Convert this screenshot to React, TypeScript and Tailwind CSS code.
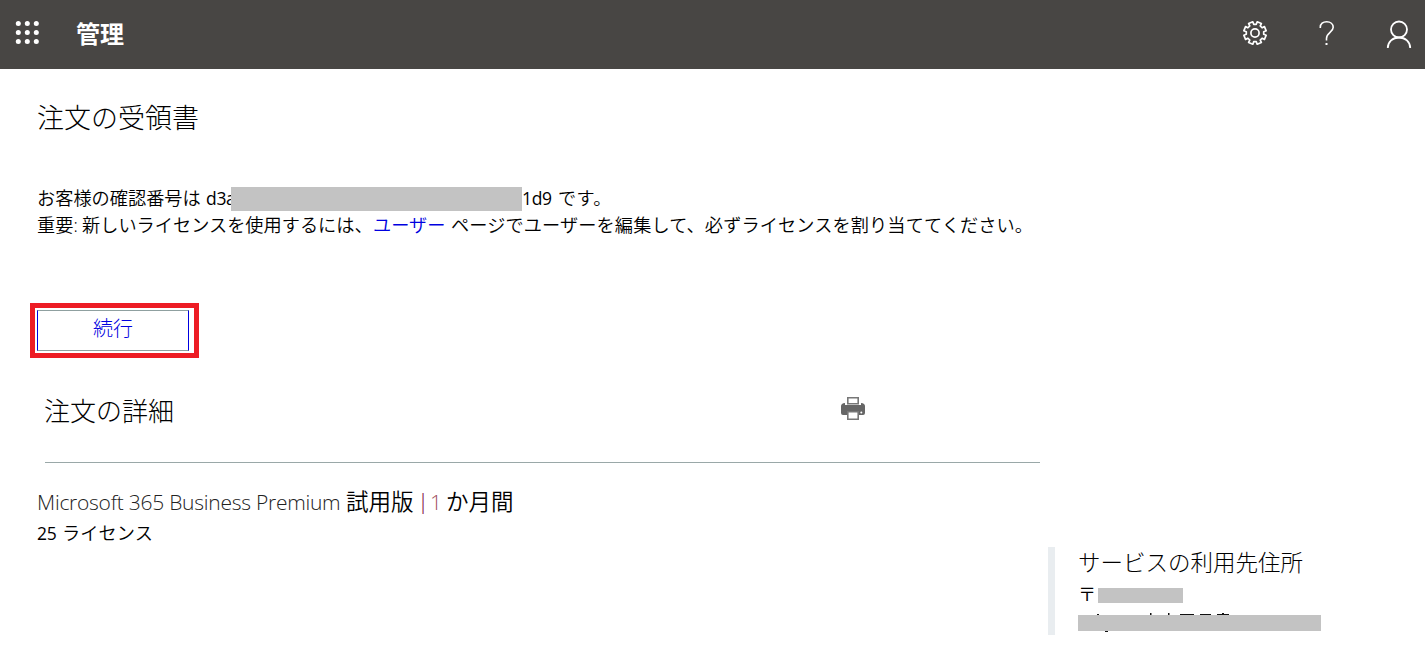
import React from "react";

interface RedactedProps {
    className: string;
}

const Redacted = ({ className }: RedactedProps) => (
    <span className={`block shrink-0 bg-[#c3c3c3] ${className}`} />
);

const WaffleIcon = () => (
    <svg width="25" height="24" viewBox="0 0 25 24" fill="#fff">
        {[2.5, 11.5, 20.5].map((cy) =>
            [3.3, 12.3, 21.3].map((cx) => (
                <circle key={`${cx}-${cy}`} cx={cx} cy={cy} r="2.5" />
            ))
        )}
    </svg>
);

// Eight teeth, with a notch pointing straight up
const gearPoints = Array.from({ length: 8 }, (_, i) =>
    [
        [-14, 8.8],
        [-11.5, 11.4],
        [11.5, 11.4],
        [14, 8.8],
    ].map(([offset, radius]) => {
        const angle = ((i * 45 + 22.5 + offset) * Math.PI) / 180;
        return `${(13 + radius * Math.sin(angle)).toFixed(2)},${(13 - radius * Math.cos(angle)).toFixed(2)}`;
    })
)
    .flat()
    .join(" ");

const GearIcon = () => (
    <svg width="26" height="26" viewBox="0 0 26 26" fill="none" stroke="#fff" strokeWidth="1.7" strokeLinejoin="round">
        <polygon points={gearPoints} />
        <circle cx="13" cy="13" r="4.1" />
    </svg>
);

const HelpIcon = () => (
    <svg width="16" height="26" viewBox="0 0 16 26" fill="none" stroke="#fff" strokeWidth="1.6">
        <path d="M1.3 8V7.3C1.3 3.8 4 1.7 7.7 1.7S14.2 4 14.2 7.2C14.2 12.4 7.5 12.5 7.5 18.5V20.5" />
        <path d="M7.5 23V25" strokeWidth="2" />
    </svg>
);

const UserIcon = () => (
    <svg width="26" height="28" viewBox="0 0 26 28" fill="none" stroke="#fff" strokeWidth="1.8">
        <circle cx="13" cy="9.5" r="8" />
        <path d="M1.8 28C1.8 21.8 6.8 17.5 13 17.5S24.2 21.8 24.2 28" />
    </svg>
);

const PrinterIcon = () => (
    <svg width="24" height="23" viewBox="0 0 24 23">
        <path fill="#666" d="M1 7Q2 6 4 6V8H20V6Q22 6 23 7Q24 8 24 9V16Q24 18 22 18H2Q0 18 0 16V9Q0 8 1 7Z" />
        <path fill="#fff" stroke="#777" strokeWidth="1.6" d="M6.8 .8H17.2V6.8H6.8ZM6.8 14.8H17.2V22.2H6.8Z" />
        <circle cx="20.3" cy="15.5" r="1" fill="#fff" />
    </svg>
);

// Stroke ends of the address that stick out past its cover
const AddressEdges = () => (
    <svg className="absolute -top-[2px] left-0" width="243" height="19" viewBox="0 0 243 19" fill="#111">
        <path d="M19 1h2v1h-2zM72 0h1.5v2h-1.5zM90 0h1.5v2h-1.5zM102 1h14v1h-14zM122 1h11v1h-11zM139 1h12v1h-12zM144 0h2v1h-2zM27 18h3v1h-3z" />
    </svg>
);

const App = () => {
    return (
        <div
            lang="ja"
            className="h-[661px] w-[1425px] overflow-hidden bg-white font-['Open_Sans','Noto_Sans_CJK_JP',sans-serif] font-[350] text-black"
        >
            <header className="flex h-[69px] items-start bg-[#484644] text-white">
                <button className="mt-[21px] ml-[15px]"><WaffleIcon /></button>
                <h1 className="mt-[15px] ml-[36px] font-['Noto_Sans_CJK_JP',sans-serif] text-[24px] leading-[36px] font-bold">管理</h1>
                <button className="mt-[20px] ml-auto"><GearIcon /></button>
                <button className="mt-[20px] ml-[51px]"><HelpIcon /></button>
                <button className="mt-[20px] mr-[13px] ml-[51px]"><UserIcon /></button>
            </header>

            <main className="pl-[37px] whitespace-nowrap">
                <h2 className="pt-[29px] text-[27px] leading-[40px] font-light">注文の受領書</h2>

                <div className="mt-[47px] text-[18.2px] leading-[27px]">
                    <p className="flex h-[27px] items-center">
                        <span className="w-[169px] shrink-0">お客様の確認番号は</span>
                        <span className="w-[25px] overflow-hidden text-[17.5px] font-normal tracking-[-0.3px]">d3a</span>
                        <Redacted className="h-[24px] w-[291px]" />
                        <span className="w-[36px] text-[17.5px] font-normal tracking-[-0.3px]">1d9</span>
                        <span className="tracking-[0.3px]">です。</span>
                    </p>
                    <p className="flex">
                        <span className="w-[45px]">重要:</span>
                        <span className="w-[291px]">新しいライセンスを使用するには、</span>
                        <a className="w-[78px] text-[#0000e0]">ユーザー</a>
                        <span className="tracking-[0.1px]">ページでユーザーを編集して、必ずライセンスを割り当ててください。</span>
                    </p>
                </div>

                <div className="mt-[64px] -ml-[7px] h-[55px] w-[169px] border-[5px] border-[#ed1c24] p-[2px]">
                    <button className="flex h-[41px] w-[152px] justify-center border border-x-[#0000e0] border-y-[#8fa0a0] text-[20px] leading-[35px] font-light text-[#0000e0]">
                        続行
                    </button>
                </div>

                <div className="ml-[8px] flex h-[105px] w-[995px] items-start border-b border-[#9aa8a8]">
                    <h3 className="mt-[33px] -ml-px w-[797px] text-[26px] leading-[40px] font-light">注文の詳細</h3>
                    <button className="mt-[39px]"><PrinterIcon /></button>
                </div>

                <h4 className="mt-[22px] flex text-[22.5px] leading-[34px]">
                    <span className="w-[309px] text-[21px] font-light tracking-[-0.25px] text-[#222]">Microsoft 365 Business Premium</span>
                    <span className="w-[71px]">試用版</span>
                    <span className="-mt-px w-[13px] text-[#7a0040]">|</span>
                    <span className="w-[16px] text-[21px] font-light text-[#a05060]">1</span>
                    <span>か月間</span>
                </h4>
                <p className="flex h-[28px] text-[18.2px] leading-[28px]">
                    <span className="w-[25px] text-[17.5px] font-normal tracking-[-0.3px]">25</span>
                    <span className="tracking-[0.1px]">ライセンス</span>
                </p>

                <aside className="ml-[1011px] h-[88px] w-[330px] border-l-[7px] border-[#e9edf0] pl-[23px]">
                    <h4 className="h-[33px] text-[22.5px] leading-[31px] font-light">サービスの利用先住所</h4>
                    <div className="flex h-[31px] text-[18.2px] leading-[28px]">
                        <span className="w-[20px]">〒</span>
                        <Redacted className="mt-[8px] h-[15px] w-[85px]" />
                    </div>
                    <div className="relative mt-[4px]">
                        <Redacted className="h-[16px] w-[243px]" />
                        <AddressEdges />
                    </div>
                </aside>
            </main>
        </div>
    );
};

export default App;
